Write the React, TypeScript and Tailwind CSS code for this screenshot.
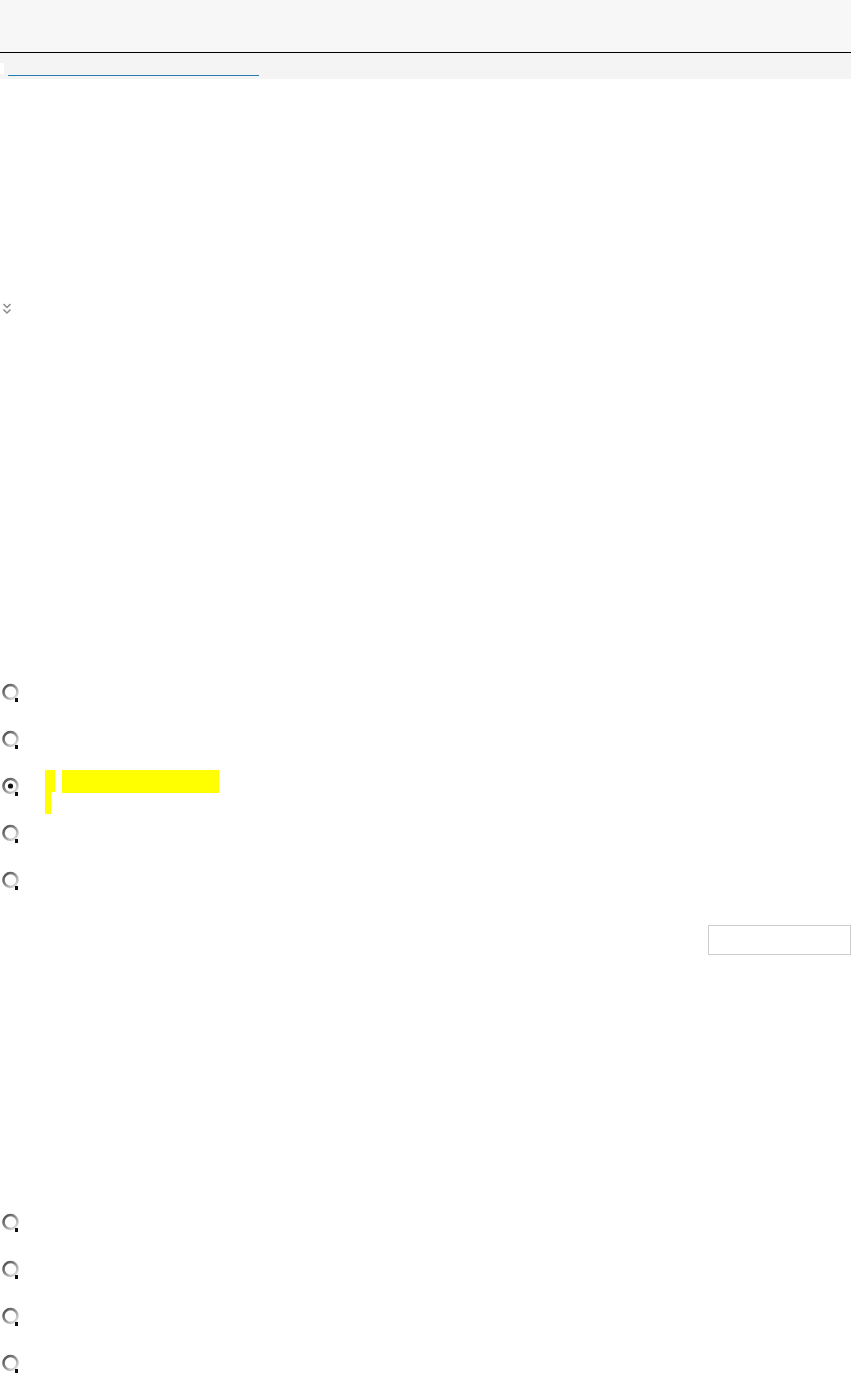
import React from "react";

const Radio: React.FC<{ checked?: boolean }> = ({ checked }) => (
  <svg width="20" height="21" viewBox="0 0 20 21" className="shrink-0">
    <defs>
      <linearGradient id="rg" x1="0" y1="0" x2="1" y2="1">
        <stop offset="0" stopColor="#444" />
        <stop offset="0.45" stopColor="#8a8a8a" />
        <stop offset="1" stopColor="#f0f0f0" />
      </linearGradient>
    </defs>
    <circle cx="9.5" cy="10" r="7" fill="#fff" stroke="url(#rg)" strokeWidth="2.6" />
    <rect x="14" y="16" width="3" height="4" fill="#111" />
    {checked && <circle cx="9.5" cy="10" r="2.6" fill="#111" />}
  </svg>
);

const App: React.FC = () => {
  const topOptions = [false, false, true, false, false];
  const bottomOptions = [false, false, false, false];

  return (
    <div className="w-[851px] min-h-[1381px] bg-white font-['Liberation_Sans',sans-serif]">
      {/* header */}
      <div className="h-[53px] bg-[#f7f7f7] border-b border-black" />
      <div className="h-[26px] bg-[#f4f4f4] flex items-start">
        <div className="w-[4px] h-[11px] mt-[10px] bg-white" />
        <div className="w-[251px] h-px mt-[22px] ml-[4px] bg-[#2b7bb5]" />
      </div>

      {/* collapsed section */}
      <div className="pt-[223px] pl-[2px] h-[603px]">
        <svg width="10" height="14" viewBox="0 0 10 14">
          <path d="M1.5 2 L5 5.5 L8.5 2 M1.5 7.5 L5 11 L8.5 7.5" fill="none" stroke="#8a8a8a" strokeWidth="1.5" />
        </svg>
      </div>

      {/* first question */}
      <div className="flex flex-col">
        {topOptions.map((c, i) => (
          <div key={i} className="h-[47px] flex items-start pl-[1px]">
            <Radio checked={c} />
            {c && (
              <div className="flex items-start ml-[24px] -mt-[6px] gap-[7px]">
                <div className="flex flex-col">
                  <div className="w-[10px] h-[22px] bg-[#ffff00]" />
                  <div className="w-[6px] h-[22px] bg-[#ffff00]" />
                </div>
                <div className="w-[157px] h-[23px] bg-[#ffff00]" />
              </div>
            )}
          </div>
        ))}
      </div>

      <div className="flex justify-end pt-[8px]">
        <input type="text" className="w-[143px] h-[30px] border border-[#ccc] bg-white outline-none" />
      </div>

      {/* second question */}
      <div className="flex flex-col pt-[257px]">
        {bottomOptions.map((c, i) => (
          <div key={i} className="h-[47px] flex items-start pl-[1px]">
            <Radio checked={c} />
          </div>
        ))}
      </div>
    </div>
  );
};

export default App;
